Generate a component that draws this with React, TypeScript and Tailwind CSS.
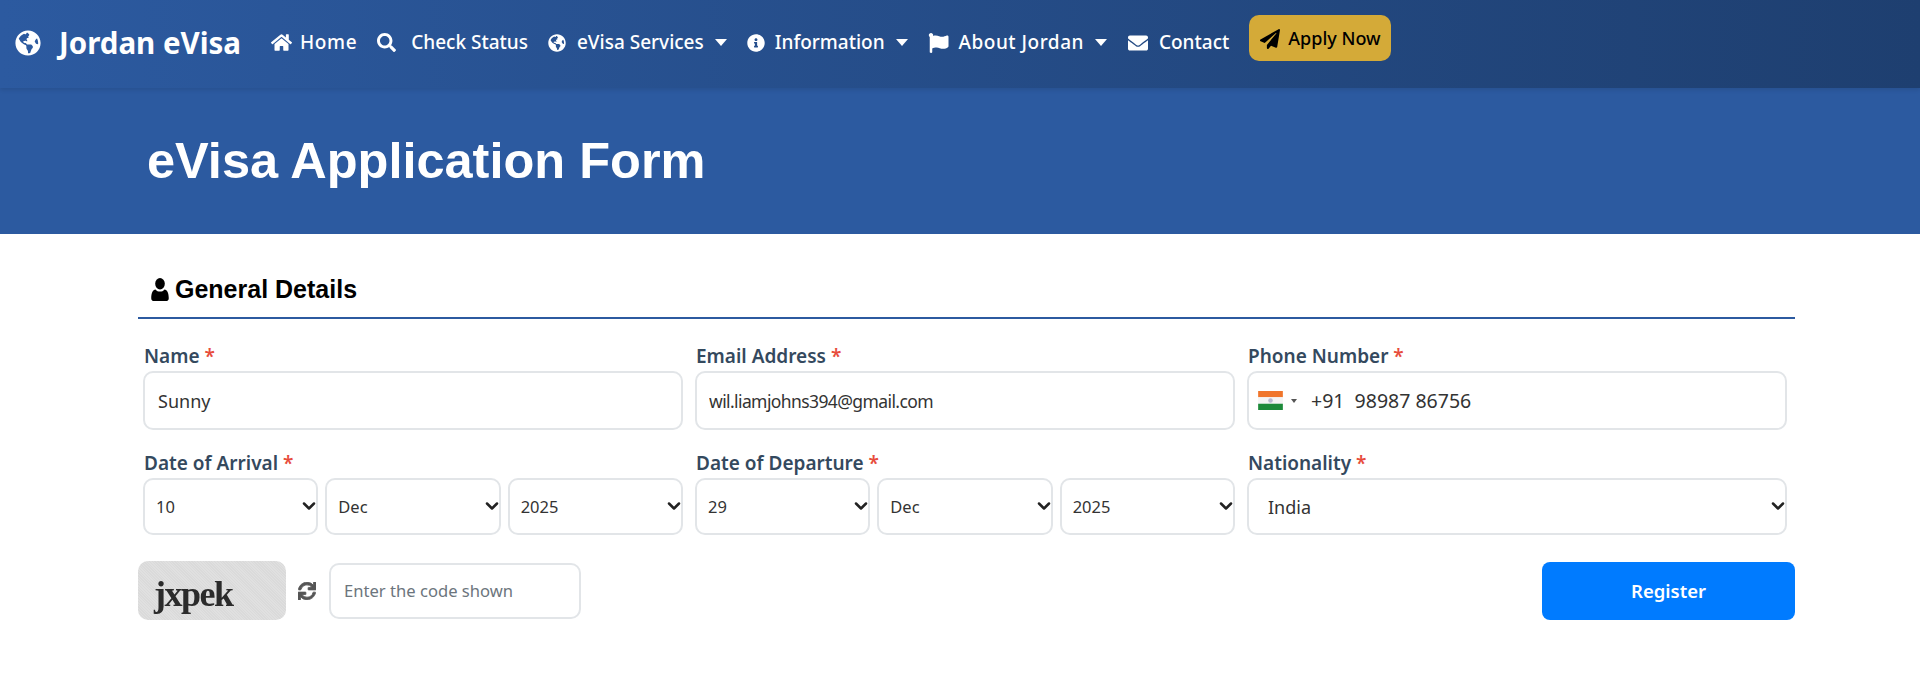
import { FaEnvelope, FaFlag, FaGlobeAmericas, FaHome, FaInfoCircle, FaPaperPlane, FaSearch, FaSync } from "react-icons/fa";
import { ChevronDown } from "lucide-react";
import type { ReactNode } from "react";

const NAV = [
  { label: "Home", slot: "w-[29px]", text: "tracking-[0.6px]", icon: <FaHome className="w-[21px] h-[19px]" /> },
  { label: "Check Status", slot: "w-[34px]", text: "", icon: <FaSearch className="w-[19px] h-[19px]" /> },
  { label: "eVisa Services", slot: "w-[29px]", text: "", icon: <FaGlobeAmericas className="w-[18px] h-[18px]" />, caret: true },
  { label: "Information", slot: "w-[28px]", text: "", icon: <FaInfoCircle className="w-[18px] h-[18px]" />, caret: true },
  { label: "About Jordan", slot: "w-[31px]", text: "tracking-[0.5px]", icon: <FaFlag className="w-[21px] h-[20px]" />, caret: true },
  { label: "Contact", slot: "w-[32px]", text: "", icon: <FaEnvelope className="w-[22px] h-[20px]" /> },
];

const FIELD = "w-full h-[59px] bg-white border-2 border-[#e2e5e8] rounded-[10px] text-[#333] outline-none";

function Label({ children }: { children: ReactNode }) {
  return (
    <div className="h-[28px] leading-[28px] ml-[1px] text-[19px] font-semibold text-[#34495e] mb-[1px]">
      {children} <span className="text-[#e74c3c]">*</span>
    </div>
  );
}

function Select({ value, className }: { value: string; className: string }) {
  return (
    <div className="relative min-w-0">
      <select defaultValue={value} className={`appearance-none w-full h-[57px] bg-white border-2 border-[#e2e5e8] rounded-[10px] text-[#333] outline-none ${className}`}>
        <option>{value}</option>
      </select>
      <ChevronDown strokeWidth={3} className="absolute right-[-1px] top-[18px] w-[20px] h-[20px] text-[#222] pointer-events-none" />
    </div>
  );
}

function DateSelects({ day }: { day: string }) {
  return (
    <div className="grid grid-cols-3 gap-[7px]">
      <Select value={day} className="pl-[11px] pt-[1px] text-[16.5px]" />
      <Select value="Dec" className="pl-[11px] pt-[1px] text-[16.5px]" />
      <Select value="2025" className="pl-[11px] pt-[1px] text-[16.5px]" />
    </div>
  );
}

export default function App() {
  return (
    <div className="min-h-[678px] bg-white font-['Noto_Sans','Open_Sans',sans-serif]">
      <nav className="h-[88px] flex items-start bg-gradient-to-r from-[#2c5aa0] to-[#1e3f70] text-white pl-[15px] shadow-[0_2px_4px_rgba(0,0,0,0.1)] relative">
        <div className="flex items-center h-[85px] mr-[30px]">
          <FaGlobeAmericas className="w-[26px] h-[26px] mr-[18px]" />
          <span className="text-[29.5px] font-bold leading-none">Jordan eVisa</span>
        </div>
        <div className="flex items-center h-[85px] gap-[20px]">
          {NAV.map((n) => (
            <a key={n.label} className="flex items-center text-[19px] font-medium">
              <span className={n.slot}>{n.icon}</span>
              <span className={n.text}>{n.label}</span>
              {n.caret && <span className="w-0 h-0 ml-[11px] border-x-[6px] border-x-transparent border-t-[7px] border-t-white"></span>}
            </a>
          ))}
        </div>
        <button className="mt-[15px] ml-[20px] h-[46px] w-[142px] pl-[11px] pt-[1px] flex items-center gap-[8px] bg-[#d4aa38] text-black text-[18px] font-medium rounded-[10px]">
          <FaPaperPlane className="w-[20px] h-[20px]" />
          Apply Now
        </button>
      </nav>

      <header className="h-[146px] bg-[#2c5aa0] pl-[147px] flex items-center">
        <h1 className="font-['Liberation_Sans',sans-serif] text-[50.5px] font-bold text-white leading-none">eVisa Application Form</h1>
      </header>

      <main className="pl-[138px] pr-[125px]">
        <h2 className="h-[85px] border-b-2 border-[#2c5aa0] flex items-center gap-[6px] pl-[13px] pt-[28px] font-['Liberation_Sans',sans-serif] text-[25px] font-bold text-black">
          <svg viewBox="0 0 16 21" className="w-[18px] h-[23px] fill-current">
            <ellipse cx="8" cy="5.2" rx="4.4" ry="5.2" />
            <path d="M2.6 21C.9 21 0 20 0 18.4 0 14 1.4 10.4 3.9 10.4 5 11.7 6.4 12.4 8 12.4s3-.7 4.1-2c2.5 0 3.9 3.6 3.9 8 0 1.6-.9 2.6-2.6 2.6z" />
          </svg>
          General Details
        </h2>

        <div className="grid grid-cols-3 gap-x-[12px] pl-[5px] pr-[8px] pt-[23px]">
          <div>
            <Label>Name</Label>
            <input defaultValue="Sunny" className={`${FIELD} px-[13px] text-[18px]`} />
          </div>
          <div>
            <Label>Email Address</Label>
            <input defaultValue="wil.liamjohns394@gmail.com" className={`${FIELD} px-[12px] text-[17.5px] tracking-[-0.6px]`} />
          </div>
          <div>
            <Label>Phone Number</Label>
            <div className={`${FIELD} flex items-center pl-[8px] text-[19.5px]`}>
              <svg viewBox="0 0 26 20" className="w-[27px] h-[19px] mr-[7px]">
                <rect width="26" height="6.6" fill="#f0752b" />
                <rect y="6.6" width="26" height="6.8" fill="#f4f4f4" />
                <rect y="13.4" width="26" height="6.6" fill="#1d8a3a" />
                <circle cx="13" cy="10" r="2.4" fill="#b9b9d0" />
              </svg>
              <span className="w-0 h-0 border-x-[3px] border-x-transparent border-t-[4px] border-t-[#555] mr-[14px]"></span>
              <span>+91&nbsp; 98987 86756</span>
            </div>
          </div>
        </div>

        <div className="grid grid-cols-3 gap-x-[12px] pl-[5px] pr-[8px] pt-[19px]">
          <div>
            <Label>Date of Arrival</Label>
            <DateSelects day="10" />
          </div>
          <div>
            <Label>Date of Departure</Label>
            <DateSelects day="29" />
          </div>
          <div>
            <Label>Nationality</Label>
            <Select value="India" className="pl-[19px] pt-[1px] text-[18px]" />
          </div>
        </div>

        <div className="flex items-center justify-between pt-[26px]">
          <div className="flex items-center">
            <div className="w-[148px] h-[59px] rounded-[10px] bg-[#dedede] bg-[repeating-linear-gradient(45deg,#e0e0e0_0,#e0e0e0_1px,#dadada_1px,#dadada_2px)] flex items-center pl-[16px] pt-[6px] font-['Liberation_Serif',serif] text-[36px] font-bold text-[#2b2b2b] blur-[0.7px] tracking-[-1.5px]">
              jxpek
            </div>
            <FaSync className="w-[18px] h-[18px] text-[#555] ml-[12px] mr-[13px] stroke-current stroke-[24]" />
            <input placeholder="Enter the code shown" className="w-[252px] h-[56px] bg-white border-2 border-[#e2e5e8] rounded-[10px] px-[13px] text-[16.6px] text-[#333] placeholder:text-[#6c757d] outline-none" />
          </div>
          <button className="w-[253px] h-[58px] bg-[#007bff] text-white text-[18.5px] font-semibold rounded-[8px]">Register</button>
        </div>
      </main>
    </div>
  );
}
